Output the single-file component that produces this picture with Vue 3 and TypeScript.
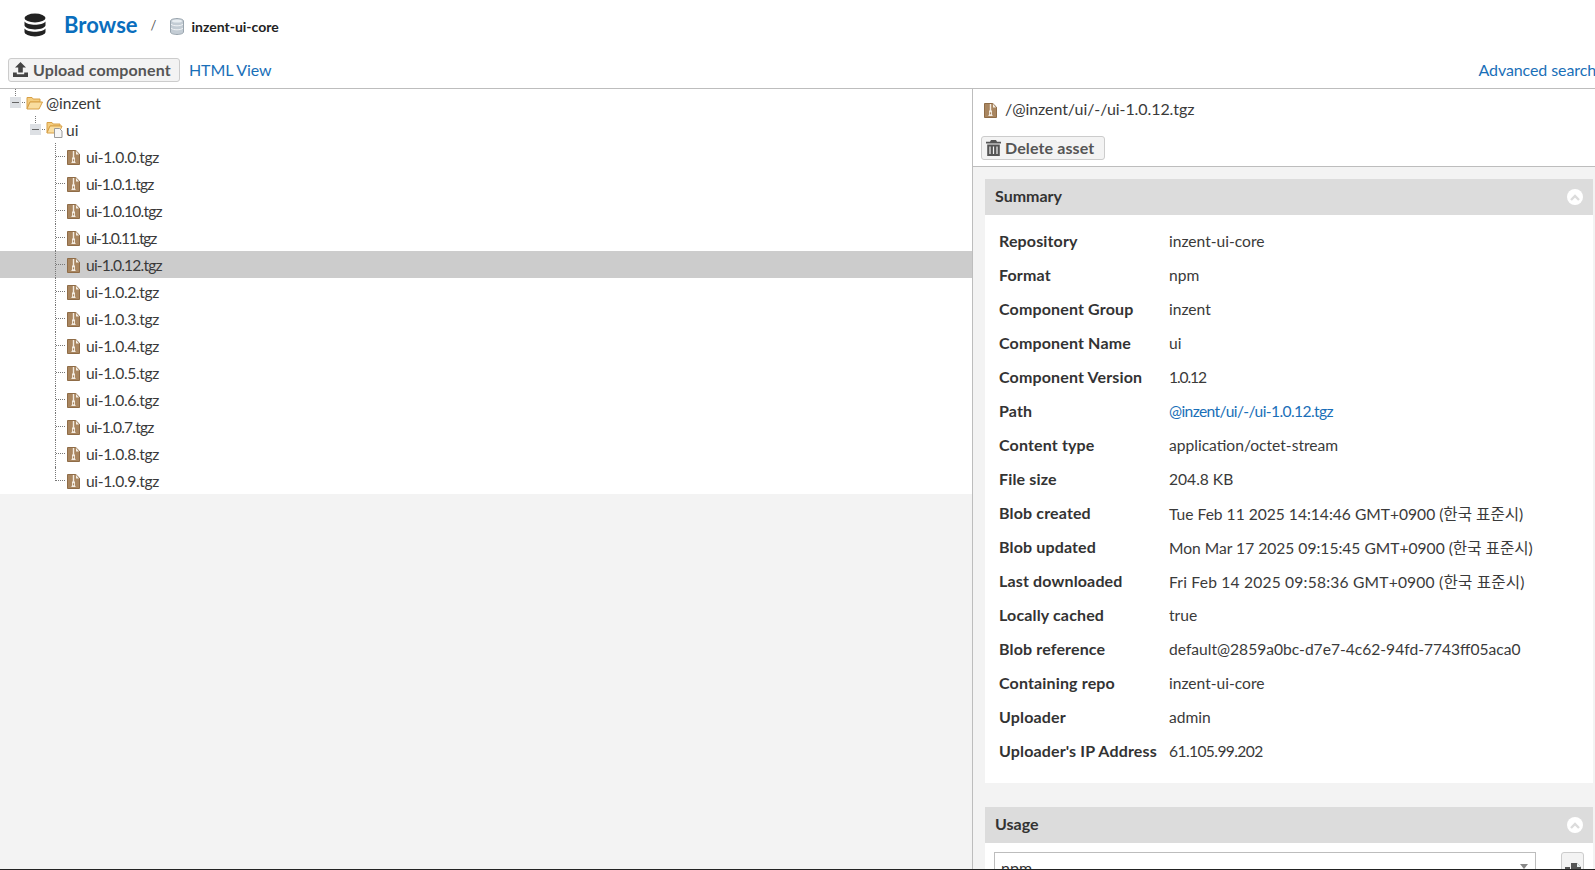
<script setup lang="ts">
const files: string[] = ['0', '1', '10', '11', '12', '2', '3', '4', '5', '6', '7', '8', '9'].map(v => `ui-1.0.${v}.tgz`)
const selected = 'ui-1.0.12.tgz'
// The reference face has very narrow 1s and 7s, so names holding them are set tighter.
const tracking = (name: string): string => {
  const narrow = (name.slice(7).match(/[17]/g) ?? []).length
  return `${(-0.35 - 0.45 * narrow).toFixed(2)}px`
}
const attrs: { k: string; v: string; link?: boolean; fit?: string }[] = [
  { k: 'Repository', v: 'inzent-ui-core' },
  { k: 'Format', v: 'npm' },
  { k: 'Component Group', v: 'inzent' },
  { k: 'Component Name', v: 'ui' },
  { k: 'Component Version', v: '1.0.12', fit: 'tighter' },
  { k: 'Path', v: '@inzent/ui/-/ui-1.0.12.tgz', link: true, fit: 'tight' },
  { k: 'Content type', v: 'application/octet-stream' },
  { k: 'File size', v: '204.8 KB' },
  { k: 'Blob created', v: 'Tue Feb 11 2025 14:14:46 GMT+0900 (한국 표준시)' },
  { k: 'Blob updated', v: 'Mon Mar 17 2025 09:15:45 GMT+0900 (한국 표준시)' },
  { k: 'Last downloaded', v: 'Fri Feb 14 2025 09:58:36 GMT+0900 (한국 표준시)', fit: 'loose' },
  { k: 'Locally cached', v: 'true' },
  { k: 'Blob reference', v: 'default@2859a0bc-d7e7-4c62-94fd-7743ff05aca0' },
  { k: 'Containing repo', v: 'inzent-ui-core' },
  { k: 'Uploader', v: 'admin' },
  { k: "Uploader's IP Address", v: '61.105.99.202', fit: 'tight' }
]
</script>

<template>
  <div class="page">
    <header class="title">
      <svg class="db-big" width="24" height="24" viewBox="0 0 24 24">
        <ellipse cx="12" cy="5" rx="10.500" ry="4.400" fill="#222" />
        <path d="M1.500 8.400c1.600 2.200 6 3.300 10.500 3.300s8.900-1.100 10.500-3.300v3.900c0 2.300-4.700 4.100-10.500 4.100s-10.500-1.800-10.500-4.100z" fill="#222" />
        <path d="M1.500 15.400c1.600 2.200 6 3.300 10.500 3.300s8.900-1.100 10.500-3.300v3.700c0 2.300-4.700 4.300-10.500 4.300s-10.500-2-10.500-4.300z" fill="#222" />
      </svg>
      <span class="browse">Browse</span>
      <span class="slash">/</span>
      <svg class="db-small" width="14" height="17" viewBox="0 0 14 17">
        <path d="M0.500 3c0-1.400 2.900-2.500 6.500-2.500s6.500 1.100 6.500 2.500v11c0 1.400-2.900 2.500-6.500 2.500s-6.500-1.100-6.500-2.500z" fill="#c3ccd4" stroke="#9aa5ae" />
        <path d="M1 6c1 1.300 3.300 1.800 6 1.800s5-.5 6-1.800M1 10c1 1.300 3.300 1.800 6 1.800s5-.5 6-1.800" fill="none" stroke="#f2f4f6" />
        <ellipse cx="7" cy="3" rx="5" ry="1.600" fill="#e8edf1" />
      </svg>
      <span class="repo">inzent-ui-core</span>
    </header>

    <div class="toolbar">
      <button class="btn upload">
        <svg width="17" height="17" viewBox="0 0 17 17">
          <path d="M8.500 1 14 6.600h-3.200v5H6.200v-5H3z" fill="#444" />
          <path d="M1 11.500h3.800v1.800h7.400v-1.800H16V16H1z" fill="#444" />
        </svg>
        <span>Upload component</span>
      </button>
      <a class="link html">HTML View</a>
      <a class="link adv">Advanced search</a>
    </div>

    <main class="split">
      <section class="left">
        <ul class="tree">
          <li class="row lvl0">
            <i class="dot-v top"></i><i class="dot-h"></i>
            <span class="exp"></span>
            <svg class="folder" width="17" height="14" viewBox="0 0 17 14">
              <path d="M1 1.500h5l1.200 1.500H14v3H4L1 12.500z" fill="#f4cd7e" stroke="#d8a047" />
              <path d="M1 13 4 6h12.500l-3.500 7z" fill="#f9dd9f" stroke="#d8a047" />
            </svg>
            <span class="label">@inzent</span>
          </li>
          <li class="row lvl1">
            <i class="dot-v top"></i><i class="dot-h"></i>
            <span class="exp"></span>
            <svg class="folder" width="17" height="17" viewBox="0 0 17 17">
              <path d="M1 1.500h5l1.200 1.500H14v2H4L1 11.500z" fill="#f4cd7e" stroke="#d8a047" />
              <path d="M1 12 4 5h12l-3 7z" fill="#f9dd9f" stroke="#d8a047" />
              <path d="M8.500 7.500h5l2.500 2.500v6.500H8.500z" fill="#f6f6f6" stroke="#9a9a9a" />
            </svg>
            <span class="label">ui</span>
          </li>
          <li v-for="(f, i) in files" :key="f" class="row lvl2" :class="{ sel: f === selected, last: i === files.length - 1 }">
            <i class="dot-v"></i><i class="dot-h"></i>
            <svg class="zip" width="13" height="15" viewBox="0 0 13 15">
              <path d="M.5.500h8.300l3.700 3.700v10.300H.5z" fill="#a98660" stroke="#8f6c47" />
              <path d="M9 1v3.500h3z" fill="#f5efe6" />
              <path d="M5.800 1h1.400v6.500h.8v4l.8 1.500H4.200l.8-1.500v-4h.8z" fill="#f3ece2" />
              <path d="M5.900 9.300h1.200v2H5.900z" fill="#a98660" />
            </svg>
            <span class="label" :style="{ letterSpacing: tracking(f) }">{{ f }}</span>
          </li>
        </ul>
      </section>

      <aside class="right">
        <div class="asset-head">
          <div class="asset-path">
            <svg width="13" height="15" viewBox="0 0 13 15">
              <path d="M.5.500h8.300l3.700 3.700v10.300H.5z" fill="#a98660" stroke="#8f6c47" />
              <path d="M9 1v3.500h3z" fill="#f5efe6" />
              <path d="M5.800 1h1.400v6.500h.8v4l.8 1.500H4.200l.8-1.500v-4h.8z" fill="#f3ece2" />
              <path d="M5.900 9.300h1.200v2H5.900z" fill="#a98660" />
            </svg>
            <span>/@inzent/ui/-/ui-1.0.12.tgz</span>
          </div>
          <button class="btn del">
            <svg width="15" height="16" viewBox="0 0 15 16">
              <path d="M5 0h5l1 1.800h4v1.700H0V1.800h4z" fill="#555" />
              <path d="M1.200 4.500h12.600V16H1.200z" fill="#555" />
              <path d="M4 6.500v7.500M7.500 6.500v7.500M11 6.500v7.500" stroke="#f2f2f2" stroke-width="1.200" />
            </svg>
            <span>Delete asset</span>
          </button>
        </div>

        <div class="content">
          <section class="panel">
            <div class="panel-head">
              <span>Summary</span>
              <span class="collapse">
                <svg width="10" height="7" viewBox="0 0 10 7"><path d="M1 6 5 2l4 4" fill="none" stroke="#dcdcdc" stroke-width="2.400" /></svg>
              </span>
            </div>
            <div class="panel-body">
              <div v-for="a in attrs" :key="a.k" class="attr">
                <span class="k">{{ a.k }}</span>
                <span class="v" :class="[a.fit, { blue: a.link }]">{{ a.v }}</span>
              </div>
            </div>
          </section>

          <section class="panel usage">
            <div class="panel-head">
              <span>Usage</span>
              <span class="collapse">
                <svg width="10" height="7" viewBox="0 0 10 7"><path d="M1 6 5 2l4 4" fill="none" stroke="#dcdcdc" stroke-width="2.400" /></svg>
              </span>
            </div>
            <div class="usage-body">
              <div class="select">
                <span>npm</span>
                <i class="caret"></i>
              </div>
              <button class="copy">
                <svg width="16" height="20" viewBox="0 0 16 20">
                  <path d="M0 6h5v14H0z" fill="#555" />
                  <path d="M6 2h6l4 4v14H6z" fill="#555" />
                  <path d="M12 2v4h4z" fill="#e8f0f0" />
                </svg>
              </button>
            </div>
          </section>
        </div>
      </aside>
    </main>
    <div class="edge"></div>
  </div>
</template>

<style>
html, body { margin: 0; overflow: hidden; background: #fff; }
</style>

<style scoped>
.page {
  width: 1595px;
  height: 870px;
  display: flex;
  flex-direction: column;
  overflow: hidden;
  position: relative;
  font-family: Lato, "Noto Sans CJK KR", sans-serif;
  font-size: 15.6px;
  color: #333;
  background: #fff;
}
.title {
  height: 50px;
  flex: none;
  display: flex;
  align-items: center;
  padding-left: 23px;
}
.db-big { margin-right: 17px; }
.browse { font-size: 22px; font-weight: 700; color: #0a6ebd; margin-right: 13px; margin-top: -2px; }
.slash { font-size: 13px; color: #555; margin-right: 14px; }
.db-small { margin-right: 7px; margin-top: 2px; }
.repo { font-size: 14px; font-weight: 700; color: #222; margin-top: 2px; }

.toolbar {
  flex: none;
  display: flex;
  align-items: center;
  padding: 1px 0 0 8px;
  box-sizing: border-box;
  border-bottom: 1px solid #bdbdbd;
  white-space: nowrap;
  height: 39px;
}
.btn {
  display: inline-flex;
  align-items: center;
  gap: 4px;
  height: 24px;
  box-sizing: border-box;
  border: 1px solid #ccc;
  border-radius: 3px;
  background: #f3f3f3;
  font: 700 16px Lato, sans-serif;
  letter-spacing: 0.12px;
  color: #555;
  padding: 0 4px 0 3px;
  white-space: nowrap;
}
.btn span { margin-top: -1px; }
.upload { width: 172px; }
.link { color: #1a6fb8; font-size: 16px; letter-spacing: -0.1px; }
.html { margin-left: 9px; }
.adv { margin-left: auto; margin-right: -1px; }

.split { flex: 1; display: flex; min-height: 0; }
.left {
  width: 972px;
  flex: none;
  background: #f3f3f3;
  border-right: 1px solid #bdbdbd;
  box-sizing: content-box;
}
.tree { list-style: none; margin: 0; padding: 0; background: #fff; }
.row {
  height: 27px;
  display: flex;
  align-items: center;
  position: relative;
  font-size: 15.6px;
  color: #3a3a3a;
}
.row.sel { background: #cccccc; }
.lvl0 { padding-left: 10px; }
.lvl1 { padding-left: 30px; }
.lvl2 { padding-left: 67px; }
.exp {
  width: 11px;
  height: 11px;
  background: #dde0e4;
  position: relative;
  flex: none;
  margin-right: 5px;
  z-index: 1;
}
.exp::after {
  content: "";
  position: absolute;
  left: 2px;
  right: 2px;
  top: 5px;
  height: 1px;
  background: #666;
}
.folder { flex: none; }
.lvl0 .label { margin-left: 3px; }
.lvl1 .label { margin-left: 3px; }
.lvl2 .label { margin-left: 6px; }
.zip { flex: none; margin-top: 2px; }
.dot-v {
  position: absolute;
  top: 0;
  bottom: 0;
  left: 55px;
  border-left: 1px dotted #777;
}
.last .dot-v { bottom: 13px; }
.dot-v.top { bottom: 18px; }
.lvl0 .dot-v { left: 15px; }
.lvl1 .dot-v { left: 35px; }
.dot-h {
  position: absolute;
  top: 13px;
  left: 56px;
  width: 9px;
  border-top: 1px dotted #777;
}
.lvl0 .dot-h { left: 16px; width: 9px; }
.lvl1 .dot-h { left: 36px; width: 9px; }

.right { flex: 1; min-width: 0; display: flex; flex-direction: column; background: #f3f3f3; }
.asset-head {
  height: 78px;
  flex: none;
  box-sizing: border-box;
  background: #fff;
  border-bottom: 1px solid #bdbdbd;
  padding: 12px 0 0 8px;
}
.asset-path {
  display: flex;
  align-items: center;
  gap: 8px;
  font-size: 16px;
  letter-spacing: -0.08px;
  color: #3a3a3a;
  padding-left: 3px;
  height: 18px;
  margin-bottom: 17px;
}
.asset-path span { margin-top: -4px; }
.del { width: 124px; padding-left: 4px; }
.content { padding: 12px 2px 0 12px; }
.panel { background: #fff; }
.panel-head {
  height: 36px;
  background: #dcdcdc;
  display: flex;
  align-items: center;
  justify-content: space-between;
  padding: 0 10px 0 10px;
  font-size: 16px;
  font-weight: 700;
  color: #333;
}
.panel-head > span:first-child { margin-top: -4px; }
.collapse {
  width: 16px;
  height: 16px;
  border-radius: 50%;
  background: #fff;
  display: flex;
  align-items: center;
  justify-content: center;
}
.panel-body { padding: 9px 14px 15px; }
.attr { height: 34px; display: flex; align-items: center; white-space: nowrap; }
.k { width: 170px; flex: none; font-weight: 700; color: #333; font-size: 16px; letter-spacing: 0.15px; margin-top: -1px; }
.v { color: #3a3a3a; font-size: 15.6px; }
.tight { letter-spacing: -0.6px; }
.tighter { letter-spacing: -1.1px; }
.loose { letter-spacing: 0.2px; }
.blue { color: #1a6fb8; }
.usage { margin-top: 24px; }
.usage-body { display: flex; padding: 9px 9px 0 9px; gap: 25px; height: 40px; }
.select {
  flex: 1;
  height: 40px;
  box-sizing: border-box;
  border: 1px solid #bdbdbd;
  padding: 5px 6px;
  font-size: 16px;
  position: relative;
}
.caret {
  position: absolute;
  right: 7px;
  top: 11px;
  border-left: 4px solid transparent;
  border-right: 4px solid transparent;
  border-top: 5px solid #888;
}
.copy {
  width: 23px;
  height: 40px;
  border: 1px solid #ccc;
  border-radius: 3px;
  background: #f3f3f3;
  padding: 3px 2px;
  box-sizing: border-box;
  display: block;
}
.edge {
  position: absolute;
  left: 0;
  right: 0;
  bottom: 0;
  height: 1px;
  background: #222;
}
</style>
